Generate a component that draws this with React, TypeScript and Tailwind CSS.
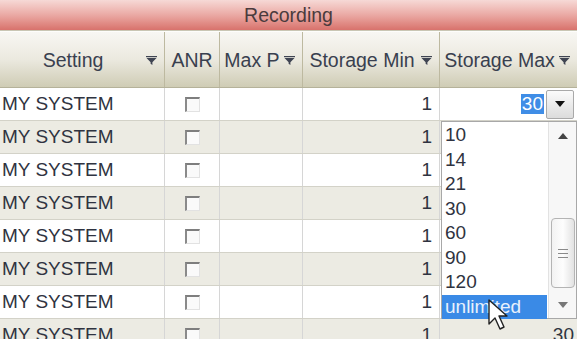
import React from "react";

const cols = [165, 55, 83, 137, 137];

function Funnel() {
	return (
		<svg width="11" height="9" viewBox="0 0 11 9" className="shrink-0">
			<path d="M0 0.6h11" stroke="#3f4452" strokeWidth="1.2" />
			<path d="M0.5 2h10L6.4 6.2V9L4.6 7.8V6.2z" fill="#3f4452" />
		</svg>
	);
}

function HeaderCell({ label, width, filter, last }: { label: string; width: number; filter?: boolean; last?: boolean }) {
	return (
		<div
			className={`h-full flex items-center shrink-0 ${last ? "" : "border-r border-[#bdb9a0]"}`}
			style={{ width }}
		>
			<span className="flex-1 text-center text-[19.5px] text-[#39404f] leading-none pt-[2px] whitespace-nowrap">
				{label}
			</span>
			{filter && (
				<span className="w-[15px] flex justify-start pt-[1px] mr-[3px]">
					<Funnel />
				</span>
			)}
		</div>
	);
}

function Checkbox() {
	return (
		<div className="w-[15px] h-[15px] border-t-2 border-l-2 border-t-[#7e7e7e] border-l-[#8a8a8a] border-r border-b border-r-[#e2e2e2] border-b-[#e2e2e2] bg-[#fafafa]" />
	);
}

function Row({ index }: { index: number }) {
	const shaded = index % 2 === 1;
	const bg = shaded ? "bg-[#ecebe3]" : "bg-white";
	return (
		<div className={`flex h-[33px] border-b border-[#d3d2c8] ${bg}`}>
			<div className="shrink-0 border-r border-[#d6d6d6] flex items-center pl-[2px] text-[19px] text-[#2f3340]" style={{ width: cols[0] }}>
				MY SYSTEM
			</div>
			<div className="shrink-0 border-r border-[#d6d6d6] flex items-center justify-center" style={{ width: cols[1] }}>
				<Checkbox />
			</div>
			<div className="shrink-0 border-r border-[#d6d6d6]" style={{ width: cols[2] }} />
			<div className="shrink-0 border-r border-[#d6d6d6] flex items-center justify-end pr-[7px] text-[19px] text-[#2f3340]" style={{ width: cols[3] }}>
				1
			</div>
			<div className="shrink-0 flex items-center justify-end pr-[3px] text-[19px] text-[#2f3340]" style={{ width: cols[4] }}>
				{index === 0 ? (
					<div className="flex items-center h-full w-full bg-white">
						<div className="flex-1 flex justify-end pr-[2px]">
							<span className="bg-[#3f8de6] text-white leading-[20px] px-[1px]">30</span>
						</div>
						<div className="w-[28px] h-[29px] border border-[#a9a9a9] rounded-[2px] bg-gradient-to-b from-[#fbfbfb] to-[#dcdcdc] flex items-center justify-center">
							<svg width="10" height="6" viewBox="0 0 10 6">
								<path d="M0 0h10L5 6z" fill="#111" />
							</svg>
						</div>
					</div>
				) : index === 7 ? (
					"30"
				) : null}
			</div>
		</div>
	);
}

const options = ["10", "14", "21", "30", "60", "90", "120", "unlimited"];

function Dropdown() {
	return (
		<div className="absolute left-[441px] top-[121px] w-[136px] h-[198px] bg-white border border-[#a8a8a8] flex">
			<div className="flex-1 flex flex-col pt-[1px]">
				{options.map((o) => (
					<div
						key={o}
						className={`h-[24.5px] flex items-center pl-[3px] text-[19px] ${
							o === "unlimited" ? "bg-[#3a8ae6] text-[#e8f1fc] mr-[1px]" : "text-[#2f3340]"
						}`}
					>
						{o}
					</div>
				))}
			</div>
			<div className="w-[28px] flex flex-col items-center bg-[#f7f7f7] border-l border-[#e2e2e2]">
				<div className="h-[28px] flex items-center justify-center">
					<svg width="10" height="6" viewBox="0 0 10 6">
						<path d="M5 0l5 6H0z" fill="#444" />
					</svg>
				</div>
				<div className="flex-1" />
				<div className="w-[24px] h-[70px] rounded-[4px] border border-[#b4b4b4] bg-gradient-to-r from-[#f2f2f2] via-[#fdfdfd] to-[#e2e2e2] flex flex-col items-center justify-center gap-[3px] mb-[4px]">
					<div className="w-[10px] h-[1px] bg-[#8a8a8a]" />
					<div className="w-[10px] h-[1px] bg-[#8a8a8a]" />
					<div className="w-[10px] h-[1px] bg-[#8a8a8a]" />
				</div>
				<div className="h-[26px] flex items-center justify-center">
					<svg width="10" height="6" viewBox="0 0 10 6">
						<path d="M0 0h10L5 6z" fill="#777" />
					</svg>
				</div>
			</div>
		</div>
	);
}

function Cursor() {
	return (
		<svg className="absolute left-[487px] top-[298px]" width="24" height="36" viewBox="0 0 24 36">
			<path
				d="M2 2v24l6-6 5 11 4-2-5-11h8z"
				fill="#fff"
				stroke="#222"
				strokeWidth="1.4"
				strokeLinejoin="round"
			/>
		</svg>
	);
}

export default function App() {
	return (
		<div className="w-[577px] h-[339px] overflow-hidden relative bg-white font-['Liberation_Sans',Arial,sans-serif]">
			<div className="h-[31px] bg-gradient-to-b from-[#f6d9d6] via-[#eaa9a4] to-[#d8726c] border-b border-[#c9c6b4] flex items-center justify-center">
				<span className="text-[19.5px] text-[#4a3b3d] pt-[2px]">Recording</span>
			</div>
			<div className="h-[57px] flex bg-gradient-to-b from-[#f8f7f3] via-[#ebe9df] to-[#cfccb5] border-b border-[#b5b29a] border-t border-t-[#fdfdfb]">
				<HeaderCell label="Setting" width={cols[0]} filter />
				<HeaderCell label="ANR" width={cols[1]} />
				<HeaderCell label="Max P" width={cols[2]} filter />
				<HeaderCell label="Storage Min" width={cols[3]} filter />
				<HeaderCell label="Storage Max" width={cols[4]} filter last />
			</div>
			{Array.from({ length: 8 }).map((_, i) => (
				<Row key={i} index={i} />
			))}
			<Dropdown />
			<Cursor />
		</div>
	);
}
